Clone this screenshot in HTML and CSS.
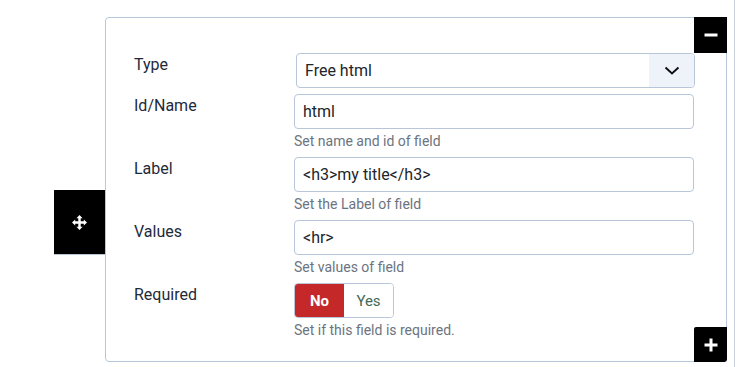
FILE: index.html
```html
<!DOCTYPE html>
<html>
<head>
<meta charset="utf-8">
<link rel="stylesheet" href="styles.css">
</head>
<body>
<div class="page">
  <div class="card">
    <div class="handle">
      <svg width="15" height="15" viewBox="0 0 16 16" fill="#fff">
        <path d="M8 0 L11.3 3.4 H9.3 V6.7 H12.6 V4.7 L16 8 L12.6 11.3 V9.3 H9.3 V12.6 H11.3 L8 16 L4.7 12.6 H6.7 V9.3 H3.4 V11.3 L0 8 L3.4 4.7 V6.7 H6.7 V3.4 H4.7 Z"/>
      </svg>
    </div>
    <div class="btn-min">
      <svg width="14" height="14" viewBox="0 0 14 14"><rect x="0.5" y="5.5" width="13" height="3" fill="#fff"/></svg>
    </div>
    <div class="form">
      <div class="lbl">Type</div>
      <div class="ctl">
        <div class="select">
          <span class="sel-text">Free html</span>
          <span class="sel-btn">
            <svg width="16" height="9" viewBox="0 0 16 9"><path d="M1.5 1.5 L8 7.5 L14.5 1.5" fill="none" stroke="#111" stroke-width="2"/></svg>
          </span>
        </div>
      </div>

      <div class="lbl">Id/Name</div>
      <div class="ctl">
        <div class="input">html</div>
        <div class="help">Set name and id of field</div>
      </div>

      <div class="lbl">Label</div>
      <div class="ctl">
        <div class="input">&lt;h3&gt;my title&lt;/h3&gt;</div>
        <div class="help">Set the Label of field</div>
      </div>

      <div class="lbl">Values</div>
      <div class="ctl">
        <div class="input">&lt;hr&gt;</div>
        <div class="help">Set values of field</div>
      </div>

      <div class="lbl">Required</div>
      <div class="ctl">
        <div class="switch">
          <span class="sw-no">No</span>
          <span class="sw-yes">Yes</span>
        </div>
        <div class="help">Set if this field is required.</div>
      </div>
    </div>
    <div class="btn-plus">
      <svg width="14" height="14" viewBox="0 0 14 14"><rect x="0.5" y="5.5" width="13" height="3" fill="#fff"/><rect x="5.5" y="0.5" width="3" height="13" fill="#fff"/></svg>
    </div>
  </div>
</div>
</body>
</html>
```

FILE: styles.css
```css
html, body {
  margin: 0;
  padding: 0;
  background: #fff;
}
body {
  font-family: Roboto, "Liberation Sans", sans-serif;
  color: #22262a;
}
.page {
  width: 735px;
  height: 367px;
  border-right: 1px solid #c9d1dd;
  box-sizing: border-box;
  padding-top: 17px;
  padding-left: 105px;
}
.card {
  position: relative;
  width: 622px;
  height: 345px;
  box-sizing: border-box;
  border: 1px solid #b9c6da;
  border-radius: 4px;
  padding: 35px 0 0 28px;
}
.handle {
  position: absolute;
  left: -52px;
  top: 172px;
  width: 51px;
  height: 64px;
  background: #000;
  border-bottom: 1px solid #b9c6da;
  display: flex;
  align-items: center;
  justify-content: center;
}
.btn-min, .btn-plus {
  position: absolute;
  right: -1px;
  width: 33px;
  background: #000;
  display: flex;
  align-items: center;
  justify-content: center;
}
.btn-min {
  top: -1px;
  height: 36px;
}
.btn-plus {
  bottom: -1px;
  height: 35px;
  border-radius: 2px 0 3px 0;
}
.form {
  display: grid;
  grid-template-columns: 160px 400px;
  row-gap: 6px;
}
.lbl {
  font-size: 16px;
  line-height: 24px;
  color: #1e2a3a;
}
.ctl {
  display: flex;
  flex-direction: column;
}
.select {
  margin-left: 2px;
  width: 399px;
  height: 35px;
  box-sizing: border-box;
  border: 1px solid #b9c6da;
  border-radius: 4px;
  display: flex;
  align-items: stretch;
  overflow: hidden;
}
.sel-text {
  flex: 1;
  font-size: 16px;
  display: flex;
  align-items: center;
  padding-left: 8px;
  color: #22262a;
}
.sel-btn {
  width: 45px;
  background: #eef3fa;
  display: flex;
  align-items: center;
  justify-content: center;
}
.input {
  height: 35px;
  box-sizing: border-box;
  border: 1px solid #b9c6da;
  border-radius: 4px;
  font-size: 16px;
  display: flex;
  align-items: center;
  padding-left: 8px;
  color: #22262a;
}
.help {
  margin-top: 3px;
  font-size: 14px;
  line-height: 19px;
  color: #6b7480;
}
.switch {
  display: flex;
  width: 100px;
  height: 35px;
  box-sizing: border-box;
  border: 1px solid #b9c6da;
  border-radius: 4px;
  overflow: hidden;
}
.sw-no, .sw-yes {
  width: 50px;
  display: flex;
  align-items: center;
  justify-content: center;
  font-size: 15px;
}
.sw-no {
  background: #c52828;
  color: #fff;
  font-weight: 700;
}
.sw-yes {
  color: #3f6a55;
  background: #fff;
}
```
